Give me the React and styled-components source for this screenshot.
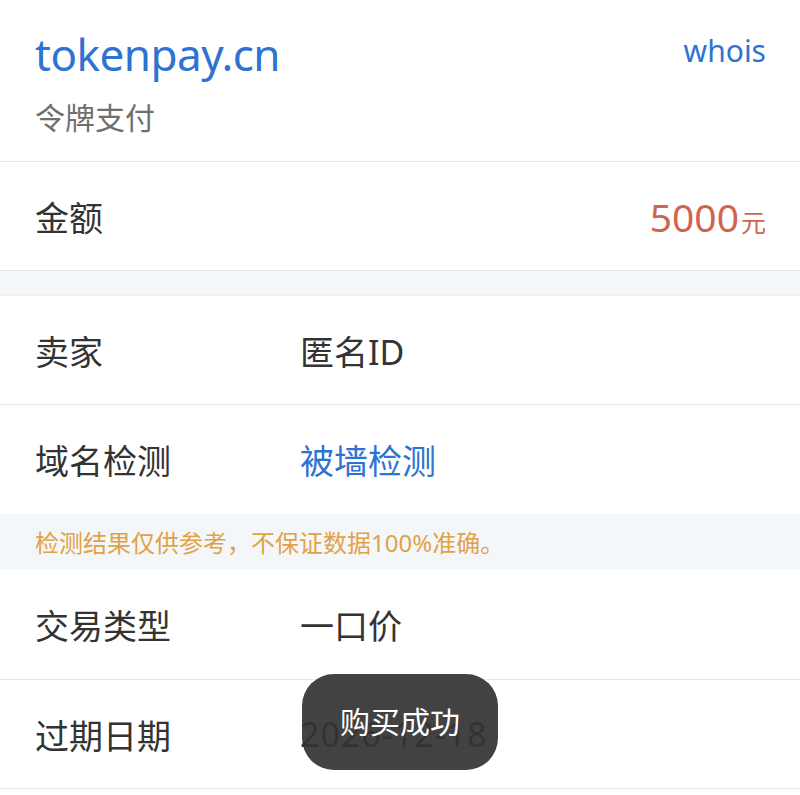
import React from "react";
import styled, { createGlobalStyle } from "styled-components";

const GlobalStyle = createGlobalStyle`
  html, body {
    margin: 0;
    padding: 0;
    background: #ffffff;
    font-family: "Noto Sans", "Noto Sans CJK SC", sans-serif;
  }
`;

const Page = styled.div`
  position: relative;
  width: 800px;
  height: 795px;
  overflow: hidden;
  background: #ffffff;
`;

const Header = styled.div`
  height: 162px;
  box-sizing: border-box;
  padding: 24px 34px 0 35px;
  border-bottom: 1px solid #e6e6e6;
`;

const HeaderTop = styled.div`
  display: flex;
  justify-content: space-between;
  align-items: center;
`;

const Domain = styled.div`
  font-size: 44px;
  line-height: 60px;
  color: #2e73d2;
  letter-spacing: -0.5px;
`;

const Whois = styled.a`
  font-size: 30px;
  line-height: 40px;
  margin-top: -6px;
  color: #2e73d2;
  text-decoration: none;
`;

const Subtitle = styled.div`
  margin-top: 12px;
  font-size: 30px;
  line-height: 44px;
  color: #6f6f6f;
`;

const Row = styled.div`
  display: flex;
  align-items: center;
  height: ${(p) => p.h || 109}px;
  box-sizing: border-box;
  padding: 0 34px 0 35px;
  border-bottom: ${(p) => (p.noBorder ? "none" : "1px solid #e4e7eb")};
`;

const Label = styled.div`
  width: 265px;
  flex-shrink: 0;
  font-size: 34px;
  color: #333333;
`;

const Value = styled.div`
  flex: 1;
  font-size: 34px;
  color: ${(p) => p.color || "#333333"};
  letter-spacing: ${(p) => p.spacing || 0}px;
`;

const Amount = styled.div`
  margin-left: auto;
  color: #d0654f;
  font-size: 39px;
  display: flex;
  align-items: baseline;
`;

const Unit = styled.span`
  font-size: 25px;
  margin-left: 2px;
`;

const Gap = styled.div`
  height: 24px;
  background: #f4f7fa;
  border-bottom: 1px solid #eef1f4;
`;

const Notice = styled.div`
  height: 55px;
  display: flex;
  align-items: center;
  padding-left: 35px;
  background: #f4f7fa;
  color: #e1a246;
  font-size: 24px;
`;

const Toast = styled.div`
  position: absolute;
  left: 302px;
  top: 674px;
  width: 196px;
  height: 96px;
  box-sizing: border-box;
  padding-bottom: 4px;
  border-radius: 32px;
  background: rgba(52, 52, 52, 0.93);
  color: #ffffff;
  font-size: 30px;
  display: flex;
  align-items: center;
  justify-content: center;
`;

export default function App() {
  return (
    <Page>
      <GlobalStyle />
      <Header>
        <HeaderTop>
          <Domain>tokenpay.cn</Domain>
          <Whois href="#">whois</Whois>
        </HeaderTop>
        <Subtitle>令牌支付</Subtitle>
      </Header>
      <Row>
        <Label>金额</Label>
        <Amount>
          5000<Unit>元</Unit>
        </Amount>
      </Row>
      <Gap />
      <Row>
        <Label>卖家</Label>
        <Value>匿名ID</Value>
      </Row>
      <Row noBorder>
        <Label>域名检测</Label>
        <Value color="#2e73d2">被墙检测</Value>
      </Row>
      <Notice>检测结果仅供参考，不保证数据100%准确。</Notice>
      <Row h={111}>
        <Label>交易类型</Label>
        <Value>一口价</Value>
      </Row>
      <Row>
        <Label>过期日期</Label>
        <Value spacing={1}>2026-12-18</Value>
      </Row>
      <Toast>购买成功</Toast>
    </Page>
  );
}
